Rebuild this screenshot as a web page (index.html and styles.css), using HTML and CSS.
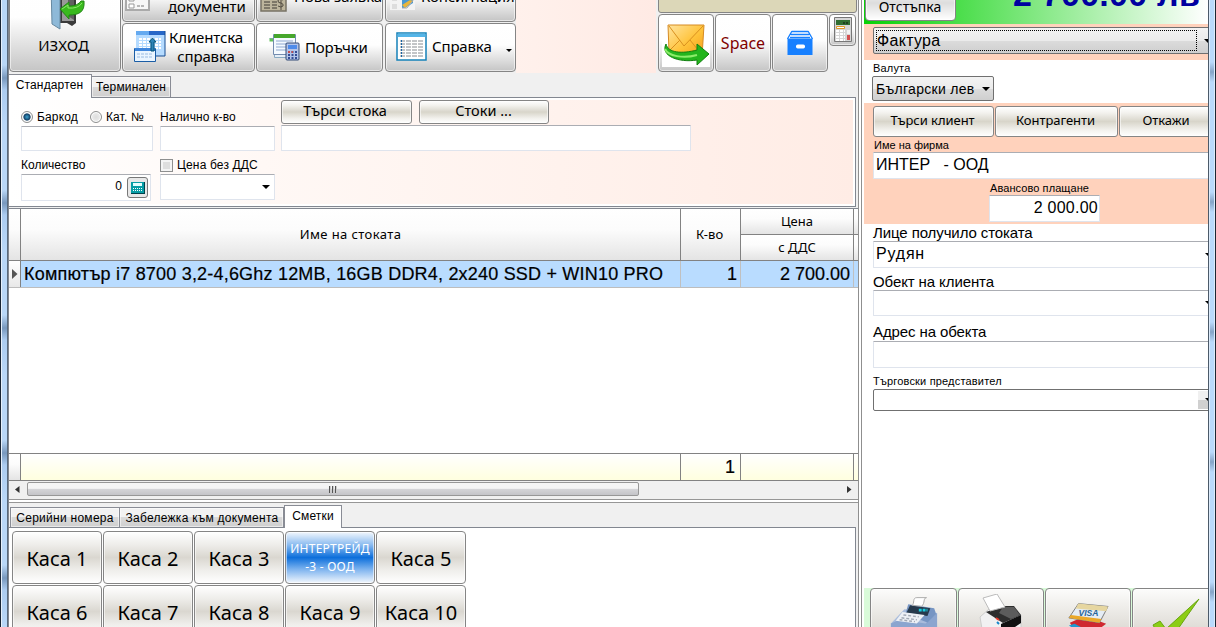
FILE: index.html
```html
<!DOCTYPE html>
<html lang="bg">
<head>
<meta charset="utf-8">
<title>Продажби</title>
<link rel="stylesheet" href="styles.css">
</head>
<body>
<div class="window">
  <div class="edge edge-left"></div>
  <main class="left">
    <div class="toolbar">
      <button class="btn exit">
        <svg width="36" height="46" viewBox="0 0 36 46"><path d="M10 0h17v38l-4 3-5-3h-8z" fill="#3a3a3a"/><path d="M13 0h12v36H13z" fill="#999"/><path d="M19 0h6v35l-6-4z" fill="#606060"/><path d="M2 0h9v44L3 39z" fill="#8eb9d8" stroke="#6688a0"/><path d="M11 24l9-7v4c6 0 10-2 12-5h3c1 11-5 14-15 14v4z" fill="#39b91e" stroke="#218514"/><path d="M13 24l6-4v3q10 1 14-5" fill="none" stroke="#8be86a"/></svg>
        <span>ИЗХОД</span>
      </button>
      <div class="col c2">
        <button class="btn doc"><svg width="26" height="34" viewBox="0 0 26 34"><path d="M1 0h23v33H1z" fill="#f7f7f7" stroke="#aaa" stroke-width="2"/><path d="M4 19h5v5H4zM4 27h5v4H4z" fill="#fff" stroke="#999"/><path d="M12 21h8M12 29h8" stroke="#777" stroke-dasharray="3 1"/><path d="M13 22l3-4" stroke="#333"/></svg><span>документи</span></button>
        <button class="btn client"><svg width="32" height="33" viewBox="0 0 32 33"><path d="M2 1h29v25H2z" fill="#b5dbff"/><path d="M2 1h29v4H2z" fill="#2868c8"/><path d="M2 1h13v4H2z" fill="#65aaf0"/><path d="M31 1v25H13" fill="none" stroke="#174d91"/><path d="M5 9h22M5 12h22M5 15h22M5 18h22" stroke="#fff" stroke-width="2" stroke-dasharray="3 1"/><path d="M.5 18.500h21v13H.5z" fill="#eaf5ff" stroke="#1b5da5"/><path d="M1 18h20v3H1z" fill="#4087dc"/><path d="M3 24h16M3 27h16" stroke="#9bbce2" stroke-dasharray="3 1"/><path d="M17 21v-9h-2l3.500-4 3.500 4h-2v9z" fill="#2c83b8" stroke="#075578"/></svg><span>Клиентска<br>справка</span></button>
      </div>
      <div class="col c3">
        <button class="btn order-new"><svg width="27" height="34" viewBox="0 0 27 34"><path d="M1 0h25v33H1z" fill="#bdb59c" stroke="#777264" stroke-width="1.500"/><path d="M4 21h6M4 24h6M4 27h6M12 21h5M12 24h5M12 27h5M4 30h6M12 30h5" stroke="#3e3b34"/><path d="M23 22q-5-2-5 1 0 2 3 2 3 1 2 3-2 2-5 0M21 19v13" fill="none" stroke="#504b40"/></svg><span>Нова заявка</span></button>
        <button class="btn orders"><svg width="31" height="29" viewBox="0 0 31 29"><path d="M.5 5.500h5v19h15" fill="#e7eff8" stroke="#8aaac2"/><path d="M.5 5.500h4v3h-4z" fill="#65c25a"/><path d="M4.500 1.500h22v20h-22z" fill="#f5faff" stroke="#748caf"/><path d="M5 1h21v4H5z" fill="#46a72c"/><path d="M7 8h17M7 11h17M7 14h10M7 17h10" stroke="#90a9d0"/><rect x="17" y="10" width="13" height="17" rx="1" fill="#b3c4e9" stroke="#304875"/><path d="M19 12h9v4h-9z" fill="#4e8bea"/><path d="M19 19h9M19 22h9M19 25h9" stroke="#334c95" stroke-width="2" stroke-dasharray="2 1.500"/><path d="M19 19h5" stroke="#c34d50" stroke-width="2" stroke-dasharray="2 1.500"/></svg><span>Поръчки</span></button>
      </div>
      <div class="col c4">
        <button class="btn consign"><svg width="26" height="34" viewBox="0 0 26 34"><path d="M0 0h25v33H0z" fill="#f3f3f3"/><path d="M2 20h5v4H2zM2 27h5v5H2z" fill="#ddd"/><path d="M12 22h11v4l-8 5h-3z" fill="#4898d2"/><path d="M12 28l8-5 3 1-8 7z" fill="#e8b53b"/><path d="M12 31h5l7-9" fill="none" stroke="#aaa"/></svg><span>Консигнация</span></button>
        <button class="btn report"><svg width="31" height="29" viewBox="0 0 31 29"><path d="M1 1h29v27H1z" fill="#fff" stroke="#1581b8" stroke-width="1.500"/><path d="M1.700 1.700h27.600V5H1.700z" fill="#54b5e8"/><path d="M4 9h23M4 12h23M4 15h23M4 18h23M4 21h23M4 24h23" stroke="#868b90" stroke-dasharray="5 1"/><path d="M5 9h1M5 12h1M5 15h1M5 18h1M5 21h1M5 24h1" stroke="#1763a5" stroke-width="2"/></svg><span>Справка</span><i class="arrow"></i></button>
      </div>
      <div class="tool-gap"></div>
      <div class="tool-right">
        <div class="display"></div>
        <div class="tool-row">
          <button class="btn sq"><svg width="49" height="48" viewBox="0 0 49 48"><defs><linearGradient id="mail" x1="0" y1="0" x2="1" y2="1"><stop stop-color="#ffe4a0"/><stop offset=".55" stop-color="#ffc33a"/><stop offset="1" stop-color="#f39b1a"/></linearGradient></defs><path d="M0 0h48v48H0z" fill="#fff"/><path d="M6 6h36l-2 32-33-5z" fill="url(#mail)" stroke="#d68b23"/><path d="M7 7l15 20L41 7M7 32l11-11M40 36L28 21" fill="none" stroke="#d9901f"/><path d="M4 25c-6 12 13 19 31 16v5l12-11-12-10v6C20 35 6 34 4 25z" fill="#23b51d" stroke="#128010"/><path d="M3 30c3 7 18 10 32 6" fill="none" stroke="#8bec6a" stroke-width="2"/></svg></button>
          <button class="btn sq space">Space</button>
          <button class="btn sq"><svg width="26" height="26" viewBox="0 0 26 26"><path d="M5 1.500h16M4 4.500h18M3 7.500h20M5 1L.5 9M21 1l4.500 8" fill="none" stroke="#1780ff" stroke-width="1.300"/><path d="M.5 8.500h25V25H.5z" fill="#1780ff"/><rect x="9" y="14.500" width="9" height="4" rx="1.700" fill="#fff"/></svg></button>
          <button class="btn tiny"><svg width="18" height="25" viewBox="0 0 18 25"><path d="M.5.5h17v24H.5z" fill="#d6d6d6" stroke="#777"/><path d="M2 3h14v5H2z" fill="#316e32"/><path d="M9 6h5" stroke="#111" stroke-dasharray="2 1"/><path d="M2.500 9.500h8v2h-8z" fill="#fff" stroke="#e09b28"/><path d="M2 14h9M2 17h9M2 20h9M2 23h9" stroke="#fff" stroke-width="2" stroke-dasharray="3 1"/><path d="M13 13h3v4h-3z" fill="#f4f4f4"/><path d="M13 18h3v5h-3z" fill="#d45050"/></svg></button>
        </div>
      </div>
    </div>

    <div class="tabs top-tabs"><div class="tab active t-std">Стандартен</div><div class="tab t-term">Терминален</div></div>
    <section class="search">
      <div class="s-col s-a">
        <div class="radios"><i class="radio on"></i><span>Баркод</span><i class="radio r2"></i><span>Кат. №</span></div>
        <div class="field f1"></div>
        <div class="lbl qty">Количество</div>
        <div class="field f-num"><span>0</span><b class="mini"><svg width="14" height="12" viewBox="0 0 14 12"><path d="M0 0h14v12H0z" fill="#00424a"/><path d="M0 0h13v11H0z" fill="#079da5"/><path d="M2 1h9v3H2z" fill="#e6ffff"/><path d="M2 6.500h9M2 8.500h9" stroke="#fff" stroke-dasharray="1 1"/></svg></b></div>
      </div>
      <div class="s-col s-b">
        <div class="lbl avail">Налично к-во</div>
        <div class="field f1"></div>
        <div class="check"><i></i><span>Цена без ДДС</span></div>
        <div class="field f-combo"><i class="arrow"></i></div>
      </div>
      <div class="s-col s-c">
        <div class="s-btns"><button class="btn band find">Търси стока</button><button class="btn band goods">Стоки ...</button></div>
        <div class="field f-long"></div>
      </div>
    </section>

    <section class="grid">
      <div class="g-head">
        <div class="hc"></div><div class="hc name">Име на стоката</div><div class="hc kvo">К-во</div>
        <div class="price"><div class="hc">Цена</div><div class="hc dds">с ДДС</div></div><div class="tail"><div class="hc"></div><div class="hc"></div></div>
      </div>
      <div class="g-row">
        <div class="mark"><svg width="6" height="10" viewBox="0 0 6 10"><path d="M0 0l5.500 5L0 10z" fill="#555"/></svg></div><div class="cell item">Компютър i7 8700 3,2-4,6Ghz 12MB, 16GB DDR4, 2x240 SSD + WIN10 PRO</div><div class="cell num one">1</div><div class="cell num sum">2 700.00</div><div></div>
      </div>
      <div class="g-body"></div>
      <div class="g-foot"><div class="hc"></div><div></div><div class="num">1</div><div></div><div></div></div>
      <div class="scroll"><svg class="sa" width="5" height="7" viewBox="0 0 5 7"><path d="M4.500 0v7L0 3.500z" fill="#333"/></svg><div class="thumb"><i></i><i></i><i></i></div><svg class="sb" width="5" height="7" viewBox="0 0 5 7"><path d="M0 0v7l4.500-3.500z" fill="#333"/></svg></div>
    </section>

    <div class="hsplit"></div>
    <div class="tabs low-tabs"><div class="tab t-ser">Серийни номера</div><div class="tab t-note">Забележка към документа</div><div class="tab active t-acc">Сметки</div></div>
    <section class="accounts">
      <button class="btn kasa">Каса 1</button><button class="btn kasa">Каса 2</button><button class="btn kasa">Каса 3</button><button class="btn kasa blue">ИНТЕРТРЕЙД<br>-3 - ООД</button><button class="btn kasa">Каса 5</button>
      <button class="btn kasa">Каса 6</button><button class="btn kasa">Каса 7</button><button class="btn kasa">Каса 8</button><button class="btn kasa">Каса 9</button><button class="btn kasa">Каса 10</button>
    </section>
  </main>
  <div class="vsplit"></div>
  <aside class="right">
    <div class="total"><button class="btn discount">Отстъпка</button><div class="amount">2 700.00 лв</div></div>
    <div class="peach doc-type"><div class="combo big"><span>Фактура</span><i class="arrow"></i></div></div>
    <div class="currency"><div class="cap">Валута</div><div class="combo cur"><span>Български лев</span><i class="arrow"></i></div></div>
    <div class="peach clientbox">
      <div class="c-btns"><button class="btn band b1">Търси клиент</button><button class="btn band b2">Контрагенти</button><button class="btn band b3">Откажи</button></div>
      <div class="cap firm-cap">Име на фирма</div>
      <div class="field firm">ИНТЕР&nbsp; &nbsp;- ООД</div>
      <div class="advance"><div class="cap">Авансово плащане</div><div class="field">2 000.00</div></div>
    </div>
    <div class="person">
      <div class="cap2 p1">Лице получило стоката</div>
      <div class="field pf1"><span>Рудян</span><i class="arrow"></i></div>
      <div class="cap2 p2">Обект на клиента</div>
      <div class="field pf2"><i class="arrow"></i></div>
      <div class="cap2 p3">Адрес на обекта</div>
      <div class="field pf3"></div>
      <div class="cap p4">Търговски представител</div>
      <div class="rep"><b><i class="arrow"></i></b></div>
    </div>
    <div class="pay">
      <button class="btn"><svg width="50" height="34" viewBox="0 0 52 34"><path d="M2 28l14-15 34 4v17H2z" fill="#a9bcdc"/><path d="M2 28l9-4 27 4 12-11v17H2z" fill="#8ba5cf"/><path d="M20 8l27 4 2 6-9 9-23-9z" fill="#7695c3"/><path d="M22 9l21 3-3 8-22-3z" fill="#26394c"/><path d="M31 14h9" stroke="#18cce0" stroke-width="3" stroke-dasharray="3 1"/><path d="M14 16l23 3-8 9-22-3z" fill="#edf0f5"/><path d="M15 19l16 2M13 22l16 2M11 24l16 2" stroke="#a2a9b5" stroke-width="1.500" stroke-dasharray="3 2"/><path d="M24 9c3-2 0-8 5-8h10c-4 1-1 5-5 9z" fill="#fff" stroke="#aaa"/></svg></button>
      <button class="btn"><svg width="44" height="34" viewBox="0 0 44 34"><path d="M1 23l9-8 10-3 22 9v14H3z" fill="#f1f1f2" stroke="#ccc"/><path d="M7 18l17-6h11l7 9-18 8z" fill="#2e2e2e"/><path d="M24 13h11l6 8-9 4-12-6z" fill="#5c5c5c"/><path d="M22 30l20-9v8l-9 6H22z" fill="#111"/><path d="M4 4l14-4 8 13-15 4z" fill="#fff" stroke="#bbb"/><path d="M17 24l3 2" stroke="#e53a2c" stroke-width="2"/><path d="M18 28l2 2" stroke="#1687cc" stroke-width="2"/></svg></button>
      <button class="btn"><svg width="42" height="29" viewBox="0 0 44 29"><path d="M3 21l16-7 22 8-9 7H8z" fill="#cf2830"/><path d="M2 24l8 5h11l-13-7z" fill="#1d9ad2"/><path d="M12 1l31 3-9 17L2 16z" fill="#e5edf5" stroke="#777"/><path d="M12 1l31 3-2 5-32-3z" fill="#e6d6a0"/><path d="M4 13l32 4-2 4-32-5z" fill="#eba82a"/><text x="12" y="14" font-family="Liberation Sans" font-size="9" font-weight="bold" font-style="italic" fill="#27659b">VISA</text></svg></button>
      <button class="btn"><svg width="48" height="34" viewBox="0 0 48 34"><path d="M1 27l7-4 6 8L47 1 21 38H7z" fill="#8ccd15" stroke="#69a511"/></svg></button>
    </div>
  </aside>
  <div class="edge edge-right"></div>
</div>
</body>
</html>
```
FILE: styles.css
```css
* { box-sizing: border-box; }
body { margin: 0; overflow: hidden; background: #fff; color: #000; font: 12px "Liberation Sans", sans-serif; }
button { font: inherit; color: #000; padding: 0; margin: 0; flex: none; }
svg { display: block; flex: none; }
.window { display: flex; width: 1216px; height: 627px; overflow: hidden; }
.edge { flex: none; }
.edge-left { width: 9px; background: linear-gradient(90deg, #182434 0 1px, #e6f0fb 1px 2px, transparent 2px 7px, #59697b 7px 8px, #828790 8px), repeating-linear-gradient(180deg, #b9d7f7 0 65px, #7898bd 78px, #acccf0 90px, #b9d7f7 125px); }
.edge-right { width: 8px; background: linear-gradient(90deg, #4c5a69 0 1px, #dcebfb 1px 2px, transparent 2px 6px, #dcebfb 6px 7px, #1b2735 7px), repeating-linear-gradient(180deg, #badafc 0 62px, #86a4c7 72px, #badafc 82px 130px); }
.left { width: 849px; flex: none; display: flex; flex-direction: column; background: #f0f0f0; }
.vsplit { width: 6px; flex: none; background: linear-gradient(90deg, #8f8f8f 0 1px, #fff 1px 3px, #8f8f8f 3px 4px, #fff 4px); }
.right { width: 344px; flex: none; display: flex; flex-direction: column; overflow: hidden; background: #fff; }

.btn { border: 1px solid #858585; border-radius: 4px; background: linear-gradient(#fff 0, #fefefe 45%, #dadada 80%, #c5c5c5 100%); box-shadow: inset 0 0 0 1px #ffffff90; font-family: "Noto Sans", sans-serif; display: flex; align-items: center; white-space: nowrap; overflow: hidden; }
.arrow { display: block; width: 0; height: 0; border: 4px solid transparent; border-top: 4px solid #000; border-bottom: 0; flex: none; }

.toolbar { height: 73px; flex: none; display: flex; align-items: flex-end; gap: 1px; padding-bottom: 1px; overflow: hidden; }
.exit { width: 112px; height: 100px; flex-direction: column; justify-content: flex-end; padding: 0 3px 16px 0; gap: 4px; font-size: 15px; line-height: 20px; }
.exit svg { margin-left: 7px; }
.col { display: flex; flex-direction: column; gap: 1px; flex: none; }
.col .btn { width: 100%; height: 49px; font-size: 15px; line-height: 19px; letter-spacing: -.15px; }
.c2 { width: 133px; }
.c3 { width: 127px; }
.c4 { width: 131px; margin-left: 1px; }
.col .doc, .col .order-new, .col .consign { align-items: flex-end; }
.doc { padding: 0 0 5px 2px; gap: 17px; }
.doc svg { margin-bottom: 5px; }
.col .client { padding: 0 0 2px 11px; gap: 3px; }
.order-new { padding: 0 0 15px 3px; gap: 7px; }
.order-new svg { margin-bottom: -6px; }
.consign { padding: 0 0 15px 4px; gap: 5px; }
.consign svg { margin-bottom: -5px; }
.orders { padding: 0 0 1px 12px; gap: 5px; }
.report { padding: 0 0 2px 10px; gap: 5px; }
.report .arrow { margin: 8px 0 0 9px; border-width: 3px 3px 0; }
.tool-gap { width: 140px; height: 73px; flex: none; background: linear-gradient(90deg, #fff1ec, #ffeae4); margin: 0 1px -1px -1px; }
.tool-right { flex: none; width: 199px; }
.display { height: 42px; border: 1px solid #858585; border-radius: 3px; background: #dcd7b8; margin-bottom: 1px; }
.tool-row { display: flex; gap: 1px; }
.sq { width: 56px; height: 58px; justify-content: center; }
.space { color: #800000; font-size: 16px; }
.tiny { width: 27px; height: 32px; justify-content: center; padding-bottom: 1px; }

.tabs { display: flex; align-items: flex-end; flex: none; background: #f0f0f0; }
.tab { border: 1px solid #898c95; border-bottom: 0; background: linear-gradient(#f2f2f2 50%, #dadada 50%, #cfcfcf); white-space: nowrap; text-align: center; box-shadow: inset 0 0 0 1px #fff8; flex: none; letter-spacing: .15px; }
.tab.active { background: #fff; position: relative; z-index: 1; margin-bottom: -1px; }
.top-tabs { height: 24px; }
.t-std { width: 83px; height: 24px; line-height: 21px; border-left: 0; padding-right: 1px; }
.t-term { width: 79px; height: 21px; line-height: 21px; border-left: 0; }
.search { height: 110px; flex: none; margin-right: 2px; border: 1px solid #828790; border-left: 0; background: linear-gradient(90deg, #fff 0, #fff8f5 30%, #ffece5 100%); box-shadow: inset 0 0 0 2px #fff; display: flex; padding-left: 12px; }
.field { border: 1px solid #dfe4ed; border-top-color: #abadb3; background: #fff; border-radius: 1px; }
.s-a { width: 132px; margin-right: 7px; }
.s-b { width: 115px; margin-right: 6px; }
.s-c { width: 410px; }
.radios { display: flex; align-items: center; height: 14px; margin-top: 12px; white-space: nowrap; letter-spacing: .15px; }
.radio { width: 12px; height: 12px; border: 1px solid #8e8f8f; border-radius: 50%; background: radial-gradient(#ddd, #f4f4f4); box-shadow: inset 0 0 0 1px #fff; margin-right: 4px; flex: none; }
.radio.on { background: radial-gradient(circle, #3aa3d0 0, #123f66 45%, #f4f4f4 58%); }
.radio.r2 { margin-left: 12px; }
.f1 { height: 25px; margin-top: 2px; }
.lbl { white-space: nowrap; height: 14px; line-height: 14px; }
.qty { margin-top: 7px; }
.avail { margin-top: 12px; letter-spacing: .15px; }
.f-num { width: 130px; height: 27px; margin-top: 2px; display: flex; align-items: flex-start; justify-content: flex-end; padding: 2px 2px 0 0; line-height: 18px; }
.mini { width: 21px; height: 21px; border: 1px solid #777; border-radius: 3px; background: #e8e8e8; margin-left: 5px; display: flex; align-items: center; justify-content: center; }
.check { display: flex; height: 14px; margin-top: 7px; align-items: center; white-space: nowrap; gap: 4px; letter-spacing: .15px; }
.check i { width: 13px; height: 13px; border: 1px solid #8e8f8f; background: #dedede; box-shadow: inset 0 0 0 2px #f4f4f4; flex: none; }
.f-combo { height: 26px; margin-top: 2px; display: flex; align-items: center; justify-content: flex-end; padding-right: 4px; }
.s-btns { display: flex; gap: 7px; margin-top: 2px; }
.band { justify-content: center; background: linear-gradient(#fff, #f3f2ee 20%, #d8d5ca 50%, #f3f2ee 80%, #fff); border-radius: 3px; }
.find { width: 131px; height: 24px; font-size: 14.500px; padding: 0 3px 4px 0; }
.goods { width: 130px; height: 24px; font-size: 14.500px; padding: 0 1px 4px 0; }
.f-long { height: 26px; margin-top: 1px; }

.grid { flex: none; height: 291px; margin: 1px 0 0; border-top: 1px solid #828790; background: #fff; display: flex; flex-direction: column; }
.g-head, .g-row, .g-foot { display: grid; grid-template-columns: 12px 660px 60px 113px 4px; flex: none; font-family: "Noto Sans", sans-serif; }
.g-head { height: 52px; font-size: 13px; }
.hc { border-right: 1px solid #828282; border-bottom: 1px solid #828282; background: linear-gradient(#fff, #fcfcfc 40%, #e4e4e4); display: flex; align-items: center; justify-content: center; padding-bottom: 2px; }
.name { letter-spacing: .4px; }
.kvo { padding-right: 2px; }
.price, .tail { display: grid; grid-template-rows: 26px 26px; }
.tail .hc { border-right: 0; }
.g-row { height: 27px; background: #b9dcff; font: 18px "Liberation Sans", sans-serif; border-bottom: 1px solid #bdbdbd; }
.mark { background: linear-gradient(#fff, #e8e8e8); border-right: 1px solid #828282; display: flex; align-items: center; justify-content: center; }
.cell { border-right: 1px solid #c0c0c0; line-height: 26px; white-space: nowrap; padding-left: 3px; -webkit-text-stroke: .2px #000; }
.item { letter-spacing: .2px; }
.num { text-align: right; padding-right: 3px; }
.g-body { flex: 1; }
.g-foot { height: 28px; font: 18px/26px "Liberation Sans", sans-serif; border: 1px solid #828282; border-width: 1px 0; background: linear-gradient(#fff, #ffffdf); }
.g-foot > div { border-right: 1px solid #828282; }
.g-foot > div:last-child { border-right: 0; }
.g-foot .hc { border-bottom: 0; }
.g-foot .num { padding-right: 5px; -webkit-text-stroke: .2px #000; }
.scroll { height: 18px; background: #f0f0f0; display: flex; align-items: center; flex: none; padding: 0 6px 2px; }
.thumb { width: 612px; height: 14px; margin-left: 7px; border: 1px solid #979797; border-radius: 2px; background: linear-gradient(#f5f5f5 0 45%, #d5d5d8 50%, #c4c4c8); display: flex; gap: 1px; align-items: center; justify-content: center; }
.thumb i { width: 2px; height: 7px; background: linear-gradient(90deg, #555 50%, #ccc 50%); }
.sb { margin-left: auto; }
.hsplit { height: 4px; flex: none; border: 1px solid #969696; border-width: 1px 0; background: #fff; }

.low-tabs { height: 24px; padding-left: 1px; }
.t-ser { width: 110px; height: 20px; line-height: 20px; letter-spacing: .27px; }
.t-note { width: 164px; height: 20px; line-height: 20px; border-left: 0; padding-left: 1px; letter-spacing: .27px; }
.t-acc { width: 58px; height: 23px; line-height: 20px; }
.accounts { flex: 1; min-height: 0; border: 1px solid #828790; border-left: 0; border-bottom: 0; margin-right: 2px; background: #fff; display: grid; grid-template-columns: repeat(5, 90px); grid-auto-rows: 53px; gap: 1px; padding: 3px; align-content: start; overflow: hidden; }
.kasa { font-size: 20px; justify-content: center; padding: 1px 0 0; background: linear-gradient(#fff, #eeedea 25%, #dad7d0 50%, #efeeeb 75%, #fff); }
.blue { background: linear-gradient(#f2f7fd, #8cbcf0 25%, #0d6fdb 50%, #78b0ee 72%, #f2f7fd); color: #fff; font-size: 12px; line-height: 18px; letter-spacing: .25px; padding-top: 0; }

.total { height: 24px; flex: none; background: linear-gradient(90deg, #07d107, #fff); display: flex; align-items: flex-end; }
.discount { width: 91px; height: 36px; margin: 0 0 3px 1px; align-items: flex-end; justify-content: center; padding: 0 1px 3px 0; font-size: 14px; line-height: 20px; background: linear-gradient(#fff, #ddd 50%, #fff); }
.amount { font: bold 34px/36px "Liberation Sans", sans-serif; color: #0000a0; margin: 0 0 12px 57px; white-space: nowrap; letter-spacing: .25px; }
.peach { background: #ffd2bc; flex: none; }
.doc-type { height: 36px; padding: 3px 0 0 9px; }
.combo { border: 1px solid #707070; border-radius: 2px; background: linear-gradient(#f3f3f3 0, #ebebeb 50%, #dcdcdc 50%, #cfcfcf); display: flex; align-items: center; white-space: nowrap; }
.big { width: 345px; height: 27px; font-size: 16px; padding: 0 2px; letter-spacing: .3px; }
.big span { border: 1px dotted #000; width: 321px; height: 21px; line-height: 20px; flex: none; }
.big .arrow { margin-left: 7px; }
.currency { height: 43px; flex: none; padding: 2px 0 0 8px; }
.cap { font-size: 11px; line-height: 13px; white-space: nowrap; letter-spacing: .18px; }
.currency .cap { margin-left: 1px; }
.cur { width: 122px; height: 25px; margin-top: 1px; font-size: 14px; padding-left: 3px; gap: 7px; letter-spacing: .3px; }
.clientbox { height: 121px; padding: 3px 0 0 9px; }
.c-btns { display: flex; gap: 1px; }
.c-btns .btn { height: 31px; font-size: 13px; padding: 0 2px 3px 0; letter-spacing: -.05px; }
.b1 { width: 121px; }
.b2 { width: 123px; }
.b3 { width: 96px; }
.firm-cap { margin: 0 0 0 1px; padding-top: 1px; line-height: 14px; letter-spacing: 0; }
.firm { height: 27px; width: 345px; margin-top: 0; font-size: 16px; line-height: 23px; padding-left: 2px; }
.advance { width: 111px; margin: 3px 0 0 117px; }
.advance .cap { letter-spacing: .08px; }
.advance .field { height: 27px; width: 111px; margin-left: -1px; text-align: right; font-size: 16px; line-height: 23px; padding-right: 1px; letter-spacing: .25px; }
.person { flex: 1; padding: 0 0 0 9px; }
.cap2 { font-size: 15px; line-height: 17px; white-space: nowrap; letter-spacing: -.1px; }
.person .field { width: 345px; display: flex; align-items: center; justify-content: flex-end; padding-right: 4px; }
.pf1 { height: 27px; font-size: 16px; }
.pf1 span { margin: 0 auto 2px 0; padding-left: 2px; letter-spacing: .8px; }
.pf2 { height: 26px; }
.pf3 { height: 27px; }
.p2 { margin-top: 5px; padding-top: 1px; line-height: 16px; }
.p3 { margin-top: 7px; padding-bottom: 1px; }
.p4 { margin-top: 7px; }
.rep { margin-top: 1px; height: 22px; width: 345px; border: 1px solid #707070; border-radius: 2px; display: flex; justify-content: flex-end; padding: 1px; }
.rep b { width: 18px; background: linear-gradient(#f0f0f0 50%, #d0d0d0 50%); display: flex; align-items: center; padding-left: 7px; }
.pay { height: 39px; flex: none; display: flex; gap: 1px; padding-left: 6px; background: #d9fbd9; overflow: hidden; }
.pay .btn { width: 87px; height: 70px; align-items: flex-start; justify-content: center; padding-top: 7px; background: linear-gradient(#fcfcfb, #dedbd5 60%, #d6d3cb); }
.pay .btn:nth-child(2) { width: 86px; padding-top: 5px; }
.pay .btn:nth-child(3) { width: 86px; padding-top: 13px; }
.pay .btn:nth-child(4) { padding-top: 9px; }
```
